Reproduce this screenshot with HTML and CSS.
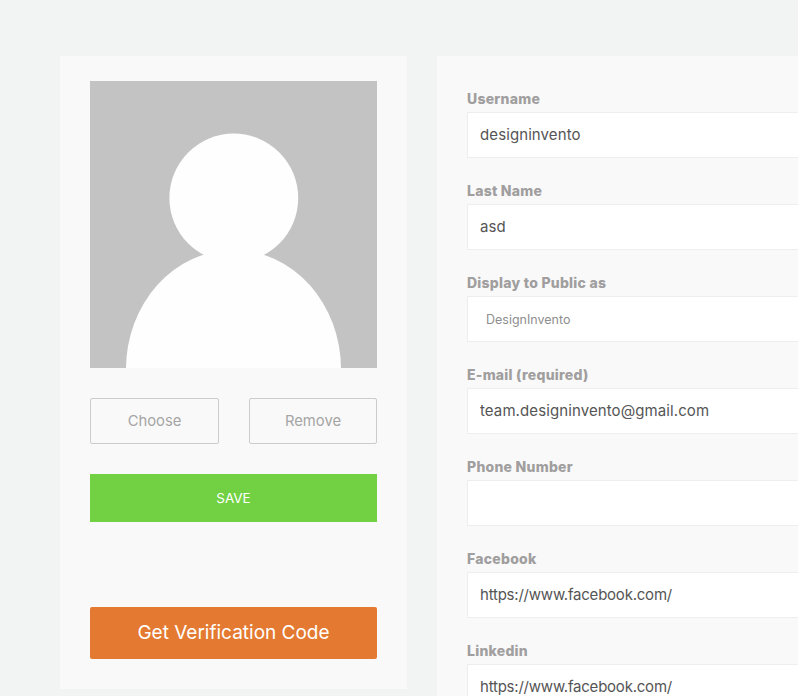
FILE: index.html
```html
<!DOCTYPE html>
<html lang="en">
<head>
<meta charset="utf-8">
<title>Edit Profile</title>
<link rel="stylesheet" href="styles.css">
</head>
<body>
<main class="page">
  <aside class="side-card">
    <svg class="avatar" viewBox="0 0 287 287" role="img" aria-label="Profile picture placeholder">
      <rect width="287" height="287" fill="#c3c3c3"/>
      <circle cx="143.8" cy="117" r="64.4" fill="#fefefe"/>
      <ellipse cx="143.5" cy="288" rx="107.5" ry="119" fill="#fefefe"/>
    </svg>
    <div class="file-actions">
      <button class="ghost-btn choose" type="button">Choose</button>
      <button class="ghost-btn remove" type="button">Remove</button>
    </div>
    <button class="save-btn" type="button">SAVE</button>
    <button class="verify-btn" type="button">Get Verification Code</button>
  </aside>
  <form class="form-card">
    <div class="field"><label>Username</label><input class="control" value="designinvento"></div>
    <div class="field"><label>Last Name</label><input class="control" value="asd"></div>
    <div class="field"><label>Display to Public as</label><select class="control select"><option>DesignInvento</option></select></div>
    <div class="field"><label>E-mail (required)</label><input class="control" value="team.designinvento@gmail.com"></div>
    <div class="field"><label>Phone Number</label><input class="control" value=""></div>
    <div class="field"><label>Facebook</label><input class="control url" value="https://www.facebook.com/"></div>
    <div class="field"><label>Linkedin</label><input class="control url" value="https://www.facebook.com/"></div>
  </form>
</main>
</body>
</html>
```
FILE: styles.css
```css
* { box-sizing: border-box; }
html, body { margin: 0; height: 696px; overflow: hidden; }
body {
  background: #f2f4f3;
  font-family: Inter, "Liberation Sans", sans-serif;
}
.page {
  display: flex;
  align-items: flex-start;
  gap: 30px;
  padding: 56px 0 0 60px;
  width: 798px;
  height: 696px;
  overflow: hidden;
}
.side-card {
  width: 347px;
  height: 633px;
  flex: none;
  background: #f9f9f9;
  padding: 25px 30px 30px;
  display: flex;
  flex-direction: column;
}
.avatar { display: block; width: 287px; height: 287px; }
.file-actions {
  display: flex;
  justify-content: space-between;
  margin-top: 30px;
}
.ghost-btn {
  height: 46px;
  background: transparent;
  border: 1px solid #cccccc;
  border-radius: 2px;
  color: #a5a5a5;
  font: 400 14.8px Inter, "Liberation Sans", sans-serif;
  padding: 0 0 1px;
}
.choose { width: 129px; }
.remove { width: 128px; }
.save-btn {
  margin-top: 30px;
  height: 48px;
  border: 0;
  background: #71d143;
  color: #fff;
  font: 400 13.5px Inter, "Liberation Sans", sans-serif;
  padding: 0;
}
.verify-btn {
  margin-top: 85px;
  height: 52px;
  border: 0;
  border-radius: 2px;
  background: #e47a31;
  color: #fff;
  font: 400 19px Inter, "Liberation Sans", sans-serif;
  padding: 0 0 1px;
}
.form-card {
  width: 700px;
  height: 800px;
  flex: none;
  background: #f9f9f9;
  padding: 34px 30px 0;
}
.field { margin-bottom: 24px; }
.field label {
  display: block;
  height: 22px;
  line-height: 18px;
  color: #a09e9e;
  font-size: 14px;
  font-weight: 800;
  letter-spacing: 0.25px;
}
.control {
  display: block;
  width: 100%;
  height: 46px;
  background: #fff;
  border: 1px solid #eeeeee;
  border-radius: 0;
  padding: 0 12px 2px;
  color: #555555;
  font: 400 15px Inter, "Liberation Sans", sans-serif;
  letter-spacing: 0.1px;
  outline: 0;
}
.url { letter-spacing: -0.22px; }
.select {
  appearance: none;
  padding: 0 12px 0 18px;
  color: #8e8e8e;
  font-size: 12.5px;
  letter-spacing: 0;
}
```
